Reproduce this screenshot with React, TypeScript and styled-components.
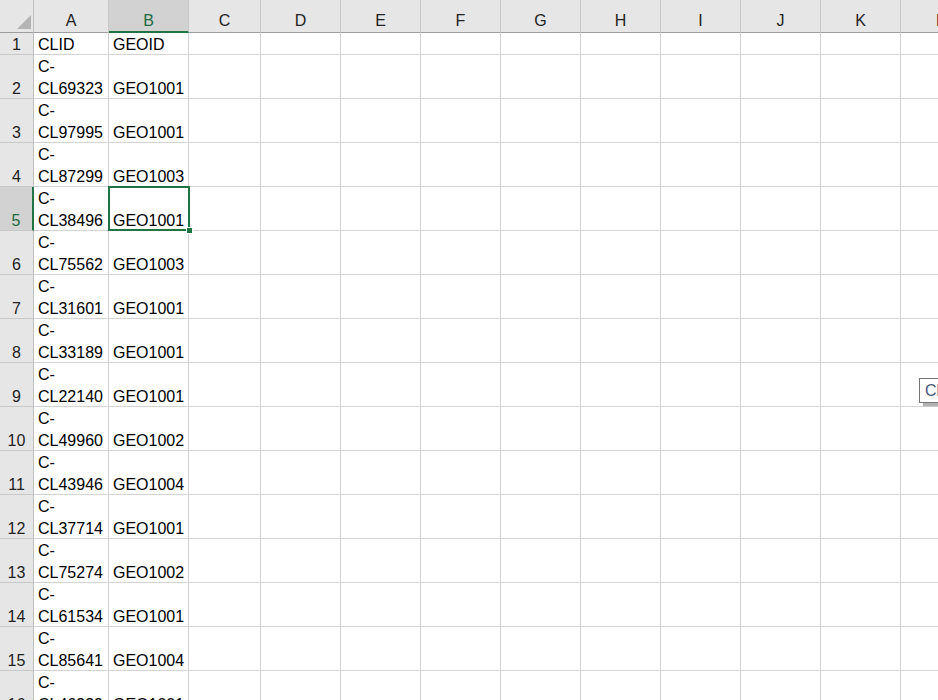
import React from "react"
import styled, { createGlobalStyle, css } from "styled-components"

const GlobalStyle = createGlobalStyle`
    html, body {
        margin: 0;
        padding: 0;
        background: #ffffff;
        overflow: hidden;
    }
    body {
        font-family: "Liberation Sans", Arial, sans-serif;
    }
`

const Sheet = styled.div`
    position: relative;
    width: 938px;
    height: 700px;
    overflow: hidden;
    background: #ffffff;
`

const Grid = styled.div`
    display: grid;
    grid-template-columns: 34px 75px 80px 72px repeat(9, 80px);
    grid-template-rows: 33px 22px repeat(15, 44px);
    font-size: 16px;
    color: #000;
`

const Corner = styled.div`
    position: relative;
    background: #e6e6e6;
    border-right: 1px solid #bfbfbf;
    border-bottom: 1px solid #9e9e9e;
    box-sizing: border-box;

    &::after {
        content: "";
        position: absolute;
        right: 2px;
        bottom: 3px;
        width: 0;
        height: 0;
        border-left: 14px solid transparent;
        border-bottom: 14px solid #b4b4b4;
    }
`

const ColHeader = styled.div<{ $active?: boolean }>`
    display: flex;
    align-items: flex-end;
    justify-content: center;
    padding-bottom: 1px;
    line-height: 20px;
    box-sizing: border-box;
    background: #e6e6e6;
    border-right: 1px solid #c8c8c8;
    border-bottom: 1px solid #9e9e9e;
    color: #222;
    ${(p) =>
        p.$active &&
        css`
            background: #d2d2d2;
            color: #1e6b41;
            border-bottom: 2px solid #217346;
            padding-bottom: 0;
        `}
`

const RowHeader = styled.div<{ $active?: boolean }>`
    display: flex;
    align-items: flex-end;
    justify-content: center;
    box-sizing: border-box;
    line-height: 22px;
    background: #e6e6e6;
    border-right: 1px solid #bfbfbf;
    border-bottom: 1px solid #c8c8c8;
    color: #222;
    ${(p) =>
        p.$active &&
        css`
            background: #d2d2d2;
            color: #1e6b41;
            border-right: 2px solid #217346;
        `}

    & > span {
        margin-bottom: -2px;
    }
`

const Cell = styled.div<{ $selected?: boolean }>`
    position: relative;
    display: flex;
    align-items: flex-end;
    padding: 0 2px 0 4px;
    box-sizing: border-box;
    border-right: 1px solid #d4d4d4;
    border-bottom: 1px solid #d4d4d4;
    line-height: 22px;
    white-space: normal;
    overflow: visible;
    ${(p) =>
        p.$selected &&
        css`
            &::after {
                content: "";
                position: absolute;
                left: -1px;
                top: -1px;
                right: -2px;
                bottom: -1px;
                border: 2px solid #217346;
                pointer-events: none;
                z-index: 2;
            }
        `}
`

const CellText = styled.span`
    display: block;
    width: 100%;
    margin-bottom: -2px;
`

const FillHandle = styled.div`
    position: absolute;
    right: -5px;
    bottom: -4px;
    width: 5px;
    height: 5px;
    background: #217346;
    border: 1px solid #ffffff;
    z-index: 3;
`

const Tip = styled.div`
    position: absolute;
    left: 919px;
    top: 378px;
    width: 40px;
    height: 25px;
    box-sizing: border-box;
    background: #ffffff;
    border: 1px solid #767676;
    box-shadow: 4px 3px 1px rgba(0, 0, 0, 0.3);
    font-size: 16px;
    line-height: 23px;
    padding-left: 5px;
    color: #4a5a78;
    white-space: nowrap;
    overflow: hidden;
`

const columns = ["A", "B", "C", "D", "E", "F", "G", "H", "I", "J", "K", "L"]

const rows: [string, string][] = [
    ["CLID", "GEOID"],
    ["C-CL69323", "GEO1001"],
    ["C-CL97995", "GEO1001"],
    ["C-CL87299", "GEO1003"],
    ["C-CL38496", "GEO1001"],
    ["C-CL75562", "GEO1003"],
    ["C-CL31601", "GEO1001"],
    ["C-CL33189", "GEO1001"],
    ["C-CL22140", "GEO1001"],
    ["C-CL49960", "GEO1002"],
    ["C-CL43946", "GEO1004"],
    ["C-CL37714", "GEO1001"],
    ["C-CL75274", "GEO1002"],
    ["C-CL61534", "GEO1001"],
    ["C-CL85641", "GEO1004"],
    ["C-CL46339", "GEO1001"],
]

const activeRow = 5
const activeCol = "B"

const App: React.FC = () => {
    return (
        <Sheet>
            <GlobalStyle />
            <Grid>
                <Corner />
                {columns.map((c) => (
                    <ColHeader key={c} $active={c === activeCol}>
                        {c}
                    </ColHeader>
                ))}
                {rows.map((r, i) => {
                    const n = i + 1
                    return (
                        <React.Fragment key={n}>
                            <RowHeader $active={n === activeRow}>
                                <span>{n}</span>
                            </RowHeader>
                            {columns.map((c, ci) => {
                                const selected = n === activeRow && c === activeCol
                                const value = ci < 2 ? r[ci] : ""
                                return (
                                    <Cell key={c} $selected={selected}>
                                        <CellText>{value}</CellText>
                                        {selected && <FillHandle />}
                                    </Cell>
                                )
                            })}
                        </React.Fragment>
                    )
                })}
            </Grid>
            <Tip>Ch</Tip>
        </Sheet>
    )
}

export default App
